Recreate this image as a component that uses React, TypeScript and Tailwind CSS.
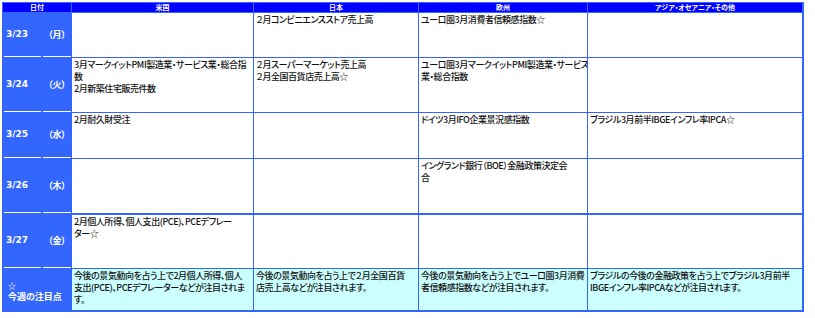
const rows = [
  {
    date: "3/23",
    dow: "（月）",
    cells: [[], ["２月コンビニエンスストア売上高"], ["ユーロ圏3月消費者信頼感指数☆"], []],
  },
  {
    date: "3/24",
    dow: "（火）",
    cells: [
      ["3月マークイットPMI製造業・サービス業・総合指", "数", "2月新築住宅販売件数"],
      ["２月スーパーマーケット売上高", "２月全国百貨店売上高☆"],
      ["ユーロ圏3月マークイットPMI製造業・サービス", "業・総合指数"],
      [],
    ],
  },
  {
    date: "3/25",
    dow: "（水）",
    cells: [["2月耐久財受注"], [], ["ドイツ3月IFO企業景況感指数"], ["ブラジル3月前半IBGEインフレ率IPCA☆"]],
  },
  {
    date: "3/26",
    dow: "（木）",
    cells: [[], [], ["イングランド銀行（BOE）金融政策決定会", "合"], []],
  },
  {
    date: "3/27",
    dow: "（金）",
    cells: [["2月個人所得、個人支出(PCE)、PCEデフレー", "ター☆"], [], [], []],
    thick: true,
  },
];

const notes = [
  ["今後の景気動向を占う上で2月個人所得、個人", "支出(PCE)、PCEデフレーターなどが注目されま", "す。"],
  ["今後の景気動向を占う上で２月全国百貨", "店売上高などが注目されます。"],
  ["今後の景気動向を占う上でユーロ圏3月消費", "者信頼感指数などが注目されます。"],
  ["ブラジルの今後の金融政策を占う上でブラジル3月前半", "IBGEインフレ率IPCAなどが注目されます。"],
];

const headers = ["米国", "日本", "欧州", "アジア・オセアニア・その他"];

function Lines({ lines }: { lines: string[] }) {
  return (
    <>
      {lines.map((l, i) => (
        <div key={i}>{l}</div>
      ))}
    </>
  );
}

export default function App() {
  return (
    <div className="min-h-screen bg-white pt-[2px] pl-[2px] font-['Noto_Sans_CJK_JP',sans-serif] [font-feature-settings:'palt']">
      <div className="grid w-fit grid-cols-[38px_29px_181px_164px_168px_214px] grid-rows-[9px_44px_54px_45px_54px_54px_41px] gap-px bg-[#3366ff] pt-px pl-px pr-[2px] pb-[2px]">
        {/* header */}
        <div className="col-span-2 bg-[#0000ff] text-center text-[7px] font-bold leading-[9px] text-white">日付</div>
        {headers.map((h) => (
          <div key={h} className="bg-[#0000ff] text-center text-[7px] font-bold leading-[9px] text-white">
            {h}
          </div>
        ))}

        {rows.map((r) => (
          <div key={r.date} className="contents">
            <div
              className={`ml-px flex items-center border-b border-white pl-[2px] font-['DejaVu_Sans',sans-serif] text-[9px] font-bold text-white ${
                r.thick ? "border-t border-t-[#3366ff]" : ""
              }`}
            >
              {r.date}
            </div>
            <div
              className={`ml-px flex items-center justify-center border-b border-white text-[9px] font-bold text-white ${
                r.thick ? "border-t border-t-[#3366ff]" : ""
              }`}
            >
              {r.dow}
            </div>
            {r.cells.map((c, i) => (
              <div
                key={i}
                className={`overflow-hidden whitespace-nowrap bg-white px-[2px] pt-px text-[9px] font-medium leading-[12px] tracking-[-0.45px] text-[#111] ${
                  r.thick ? "border-t border-[#3366ff]" : ""
                }`}
              >
                <Lines lines={c} />
              </div>
            ))}
          </div>
        ))}

        {/* weekly focus */}
        <div className="col-span-2 ml-px flex flex-col justify-center pl-[4px] pt-[3px] text-[9px] font-bold leading-[11px] text-white">
          <div className="text-[8px]">☆</div>
          <div>今週の注目点</div>
        </div>
        {notes.map((c, i) => (
          <div
            key={i}
            className="overflow-hidden whitespace-nowrap bg-[#ccffff] px-[2px] pt-px text-[9px] font-medium leading-[12px] tracking-[-0.45px] text-[#111]"
          >
            <Lines lines={c} />
          </div>
        ))}
      </div>
    </div>
  );
}
